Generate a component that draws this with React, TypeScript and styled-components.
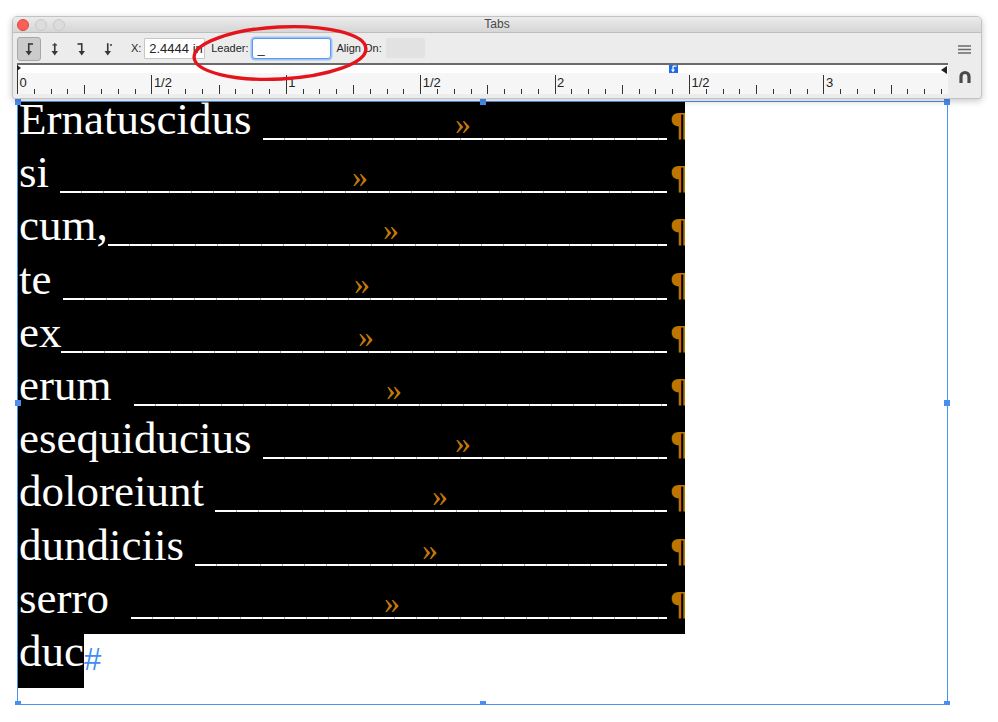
import React from 'react';
import styled, { createGlobalStyle } from 'styled-components';

const GlobalStyle = createGlobalStyle`
  html, body {
    margin: 0;
    padding: 0;
    background: #fff;
  }
  body {
    font-family: "Liberation Sans", Arial, sans-serif;
  }
`;

// page x of the » tab marker on each line
const lines = [
  { word: 'Ernatuscidus ', mark: 455 },
  { word: 'si ', mark: 352 },
  { word: 'cum,', mark: 383 },
  { word: 'te ', mark: 354 },
  { word: 'ex', mark: 358 },
  { word: 'erum  ', mark: 386 },
  { word: 'esequiducius ', mark: 455 },
  { word: 'doloreiunt ', mark: 432 },
  { word: 'dundiciis ', mark: 422 },
  { word: 'serro  ', mark: 384 },
];

const HALF_INCH = 134.4;
const rulerLabels = ['0', '1/2', '1', '1/2', '2', '1/2', '3'];

type Spot = 'start' | 'mid' | 'end';
const handles: [Spot, Spot][] = [
  ['start', 'start'],
  ['mid', 'start'],
  ['end', 'start'],
  ['start', 'mid'],
  ['end', 'mid'],
  ['start', 'end'],
  ['mid', 'end'],
  ['end', 'end'],
];

const spotPos = (s: Spot) => (s === 'start' ? '0%' : s === 'mid' ? '50%' : '100%');

const TabIcon = ({ kind, color = '#383838' }: { kind: 'left' | 'center' | 'right' | 'decimal'; color?: string }) => (
  <svg width="12" height="15" viewBox="0 0 12 15">
    {kind === 'left' && <path d="M5.5 2H10" stroke={color} strokeWidth="1.6" />}
    {kind === 'right' && <path d="M1.5 2H6" stroke={color} strokeWidth="1.6" />}
    {kind === 'center' && <path d="M3.5 3H8" stroke={color} strokeWidth="1.2" />}
    {kind === 'decimal' && <circle cx="9" cy="3" r="1" fill={color} />}
    <path d="M5.75 1.2V10" stroke={color} strokeWidth="1.6" />
    <path d="M2.5 9L5.75 13.5L9 9Z" fill={color} />
  </svg>
);

const Ruler = () => {
  const ticks = [];
  for (let i = 0; i * 16.8 <= 931; i++) {
    const x = Math.round(i * 16.8) + 0.5;
    const top = i === 0 ? 0 : i % 8 === 0 ? 10 : i % 4 === 0 ? 20 : 24;
    ticks.push(<line key={i} x1={x} x2={x} y1={top} y2={29} stroke="#333" strokeWidth="1" />);
  }
  return (
    <svg width="931" height="29" viewBox="0 0 931 29">
      {ticks}
      {rulerLabels.map((l, i) => (
        <text
          key={i}
          x={i * HALF_INCH + 2.5}
          y={21.5}
          fontSize="13"
          fontFamily="Liberation Sans, Arial, sans-serif"
          fill="#222"
        >
          {l}
        </text>
      ))}
      <path d="M0 0L4 3L0 6Z" fill="#222" />
      <rect x="652" y="0" width="9" height="8" fill="#1f6be3" />
      <path d="M656 1.2H659.5M656 1V5" stroke="#fff" strokeWidth="1.2" />
      <path d="M654 4.5L656 7.5L658 4.5Z" fill="#fff" />
      <path d="M930 1L924 5L930 9Z" fill="#222" />
    </svg>
  );
};

const App = () => {
  return (
    <>
      <GlobalStyle />
      <Page>
        <Palette>
          <TitleBar>
            <Lights>
              <Light $on />
              <Light />
              <Light />
            </Lights>
            <Title>Tabs</Title>
            <span />
          </TitleBar>
          <PaletteBody>
            <MainCol>
              <Toolbar>
                <ToolButton $selected>
                  <TabIcon kind="left" />
                </ToolButton>
                <ToolButton>
                  <TabIcon kind="center" />
                </ToolButton>
                <ToolButton>
                  <TabIcon kind="right" />
                </ToolButton>
                <ToolButton>
                  <TabIcon kind="decimal" />
                </ToolButton>
                <Label $gap={11}>X:</Label>
                <Field $width={61}>2.4444 in</Field>
                <Label $gap={6}>Leader:</Label>
                <Field $width={79} $focus>_</Field>
                <Label $gap={6}>Align On:</Label>
                <DisabledField />
              </Toolbar>
              <RulerBox>
                <Ruler />
              </RulerBox>
            </MainCol>
            <SideCol>
              <svg width="13" height="9" viewBox="0 0 13 9">
                <path d="M0 1H13M0 4.5H13M0 8H13" stroke="#6a6a6a" strokeWidth="1.4" />
              </svg>
              <svg width="14" height="13" viewBox="0 0 14 13">
                <path d="M3 13V6.5a4 4 0 0 1 8 0V13" stroke="#4a4a4a" strokeWidth="3.2" fill="none" />
              </svg>
            </SideCol>
          </PaletteBody>
          <Annotation viewBox="0 0 970 83">
            <ellipse
              cx="268"
              cy="37"
              rx="86"
              ry="26"
              fill="none"
              stroke="#e4141c"
              strokeWidth="3.4"
              transform="rotate(-3 268 37)"
            />
          </Annotation>
        </Palette>

        <Frame>
          <Story>
            {lines.map((l) => (
              <Line key={l.word}>
                <Word>{l.word}</Word>
                <Leader />
                <Chevron style={{ left: l.mark - 18 }}>»</Chevron>
                <Pilcrow>¶</Pilcrow>
              </Line>
            ))}
            <LastLine>
              <Word $highlight>duc</Word>
              <EndMark>#</EndMark>
            </LastLine>
          </Story>
          {handles.map(([x, y]) => (
            <Handle key={`${x}-${y}`} $x={x} $y={y} />
          ))}
        </Frame>
      </Page>
    </>
  );
};

const Page = styled.div`
  padding: 16px 0 0 12px;
`;

const Palette = styled.div`
  position: relative;
  box-sizing: border-box;
  width: 970px;
  padding-bottom: 4px;
  background: #ececec;
  border: 1px solid #c3c3c3;
  border-radius: 5px 5px 3px 3px;
  box-shadow: 0 2px 7px rgba(0, 0, 0, 0.22);
  z-index: 2;
`;

const TitleBar = styled.div`
  display: grid;
  grid-template-columns: 1fr auto 1fr;
  align-items: center;
  height: 15px;
  background: linear-gradient(#ebebeb, #d6d6d6);
  border-bottom: 1px solid #bdbdbd;
  border-radius: 4px 4px 0 0;
`;

const Lights = styled.div`
  display: flex;
  gap: 6px;
  padding-left: 4px;
`;

const Light = styled.span<{ $on?: boolean }>`
  box-sizing: border-box;
  width: 12px;
  height: 12px;
  border-radius: 50%;
  background: ${({ $on }) => ($on ? '#fc5f57' : '#dcdcdc')};
  border: 1px solid ${({ $on }) => ($on ? '#de4640' : '#c9c9c9')};
`;

const Title = styled.span`
  font-size: 12px;
  color: #4a4a4a;
  line-height: 15px;
`;

const PaletteBody = styled.div`
  display: flex;
`;

const MainCol = styled.div`
  display: flex;
  flex-direction: column;
  padding-left: 4px;
`;

const Toolbar = styled.div`
  display: flex;
  align-items: center;
  height: 30px;
  gap: 2.3px;
`;

const ToolButton = styled.div<{ $selected?: boolean }>`
  box-sizing: border-box;
  width: 24px;
  height: 24px;
  margin-top: 2px;
  display: flex;
  align-items: center;
  justify-content: center;
  border-radius: 3px;
  background: ${({ $selected }) => ($selected ? '#cbcbcb' : 'transparent')};
  border: 1px solid ${({ $selected }) => ($selected ? '#a7a7a7' : 'transparent')};
`;

const Label = styled.span<{ $gap: number }>`
  margin-left: ${({ $gap }) => $gap - 2.3}px;
  font-size: 11px;
  color: #1f1f1f;
  white-space: nowrap;
`;

const Field = styled.div<{ $width: number; $focus?: boolean }>`
  box-sizing: border-box;
  width: ${({ $width }) => $width}px;
  height: 21px;
  margin-left: 0.7px;
  padding-left: ${({ $focus }) => ($focus ? 5 : 4)}px;
  background: #fff;
  border: 1px solid ${({ $focus }) => ($focus ? '#5b9af0' : '#c6c6c6')};
  border-radius: ${({ $focus }) => ($focus ? 3 : 1)}px;
  box-shadow: ${({ $focus }) => ($focus ? '0 0 0 1.5px #9dc2f6' : 'none')};
  font-size: 13px;
  line-height: 19px;
  color: #222;
  white-space: nowrap;
  overflow: hidden;
`;

const DisabledField = styled.div`
  width: 39px;
  height: 20px;
  margin-left: 2px;
  background: #e2e2e2;
  border-radius: 2px;
`;

const RulerBox = styled.div`
  width: 931px;
  height: 29px;
  border-top: 2px solid #6b6b6b;
  background: linear-gradient(#fff 0 8px, #f6f6f6 8px);
  svg {
    display: block;
  }
`;

const SideCol = styled.div`
  flex: 1;
  display: flex;
  flex-direction: column;
  align-items: center;
  padding-top: 12px;
  gap: 16px;
`;

const Annotation = styled.svg`
  position: absolute;
  left: -1px;
  top: -1px;
  width: 970px;
  height: 83px;
  pointer-events: none;
`;

const Frame = styled.div`
  position: relative;
  box-sizing: border-box;
  width: 931px;
  height: 604px;
  margin: 2px 0 0 5px;
  border: 1px solid #4b92ef;
`;

const Story = styled.div`
  display: flex;
  flex-direction: column;
`;

const Line = styled.div`
  position: relative;
  display: flex;
  align-items: flex-start;
  width: 667px;
  height: 53.2px;
  flex-shrink: 0;
  background: #000;
`;

const Word = styled.span<{ $highlight?: boolean }>`
  padding: 0 0 0 1px;
  font-family: "Liberation Serif", "Times New Roman", serif;
  font-size: 45px;
  line-height: 35px;
  color: #fff;
  white-space: pre;
  ${({ $highlight }) => $highlight && 'background: #000; height: 54px;'}
`;

const Leader = styled.span`
  flex: 1;
  height: 38px;
  background: repeating-linear-gradient(90deg, #fff 0 21px, #a5a5a5 21px 22px) left bottom / 100% 2px no-repeat;
`;

const Chevron = styled.span`
  position: absolute;
  top: 5px;
  font-family: "Liberation Serif", "Times New Roman", serif;
  font-size: 32px;
  line-height: 32px;
  color: #c47808;
`;

const Pilcrow = styled.span`
  flex-shrink: 0;
  width: 15px;
  height: 40px;
  margin-left: 3px;
  overflow: hidden;
  font-family: "Liberation Serif", "Times New Roman", serif;
  font-weight: bold;
  font-size: 34px;
  line-height: 43px;
  color: #c07400;
`;

const LastLine = styled.div`
  display: flex;
  align-items: flex-start;
`;

const EndMark = styled.span`
  margin-top: 10px;
  font-family: "Liberation Sans", Arial, sans-serif;
  font-size: 31px;
  line-height: 31px;
  color: #3f8df2;
`;

const Handle = styled.span<{ $x: Spot; $y: Spot }>`
  position: absolute;
  left: ${({ $x }) => spotPos($x)};
  top: ${({ $y }) => spotPos($y)};
  width: 6px;
  height: 6px;
  transform: translate(-50%, -50%);
  background: #4a8ff0;
`;

export default App;
